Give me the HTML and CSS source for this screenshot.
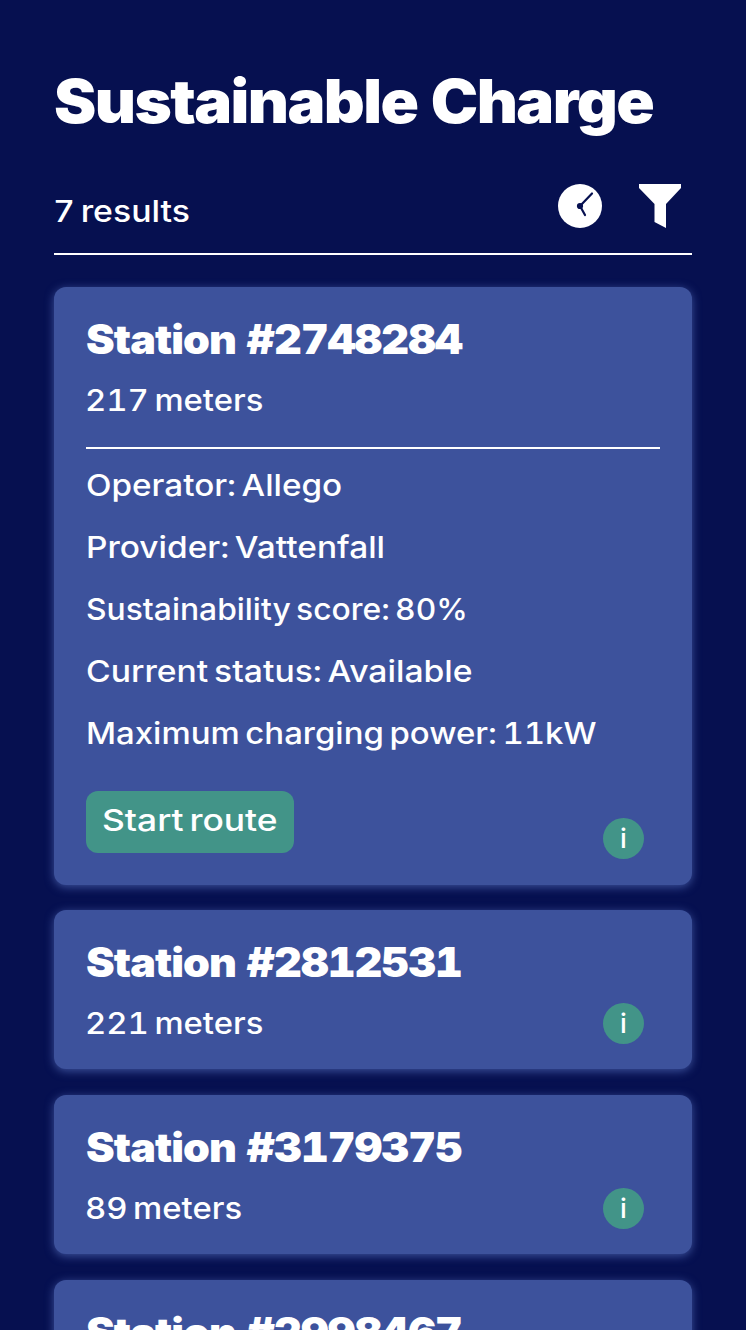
FILE: index.html
```html
<!DOCTYPE html>
<html lang="en">
<head>
<meta charset="utf-8">
<title>Sustainable Charge</title>
<link rel="stylesheet" href="styles.css">
</head>
<body>
<main class="page">
  <h1 class="title">Sustainable Charge</h1>
  <header class="toolbar">
    <p class="text results">7 results</p>
    <div class="tools">
      <svg class="clock" viewBox="0 0 44 44" width="44" height="44"><circle cx="22" cy="22" r="22" fill="#fff"/><path d="M22 22L34 9.500M22 22L27 31" stroke="#061050" stroke-width="2.200" stroke-linecap="round"/><circle cx="22" cy="22" r="3.100" fill="#061050"/></svg>
      <svg class="filter" viewBox="0 0 42 44" width="42" height="44"><path d="M0 0H42V4L27 20V44L15.500 38V20L0 4Z" fill="#fff"/></svg>
    </div>
  </header>
  <section class="stations">
    <article class="card open">
      <h2 class="name">Station #2748284</h2>
      <p class="text distance">217 meters</p>
      <ul class="details">
        <li class="text operator">Operator: Allego</li>
        <li class="text provider">Provider: Vattenfall</li>
        <li class="text score">Sustainability score: 80%</li>
        <li class="text status">Current status: Available</li>
        <li class="text power">Maximum charging power: 11kW</li>
      </ul>
      <button class="route"><span class="text route-label">Start route</span></button>
      <button class="info">i</button>
    </article>
    <article class="card">
      <h2 class="name">Station #2812531</h2>
      <p class="text distance">221 meters</p>
      <button class="info">i</button>
    </article>
    <article class="card">
      <h2 class="name">Station #3179375</h2>
      <p class="text distance">89 meters</p>
      <button class="info">i</button>
    </article>
    <article class="card">
      <h2 class="name">Station #2998467</h2>
    </article>
  </section>
</main>
</body>
</html>
```
FILE: styles.css
```css
* { box-sizing: border-box; margin: 0; padding: 0; }
body { height: 1330px; overflow: hidden; background: #061050; color: #fff; font-family: Inter, sans-serif; font-variant-numeric: tabular-nums; }
.page { height: 1330px; overflow: hidden; padding: 66px 54px 0; }
.title, .name, .text { width: max-content; white-space: nowrap; transform-origin: 0 50%; transform: scaleX(var(--stretch, 1)); }
.title { --stretch: 1.059; font-size: 60px; line-height: 70px; font-weight: 900; letter-spacing: -1.5px; word-spacing: -2px; }
.toolbar { height: 119px; border-bottom: 2px solid #fff; display: flex; justify-content: space-between; align-items: flex-end; }
.text { --stretch: 1.115; font-size: 30px; line-height: 38px; font-weight: 500; word-spacing: -3px; }
.results { --stretch: 1.128; margin: 0 0 23px -1px; }
.tools { display: flex; gap: 37px; padding: 0 11px 25px 0; }
.tools svg { display: block; }
.stations { padding-top: 32px; display: grid; gap: 26px; }
.card { position: relative; height: 159px; padding: 28px 32px 27px; border-radius: 12px; background: #3d529c; box-shadow: 0 2px 10px #3d529c; }
.card.open { height: 598px; padding-bottom: 32px; margin-bottom: -1px; }
.name { --stretch: 1.05; font-size: 41px; line-height: 48px; font-weight: 900; letter-spacing: -0.9px; }
.distance { --stretch: 1.095; margin: 18px 0 0 -1px; }
.details { list-style: none; margin-top: 28px; padding-top: 5px; border-top: 2px solid #fff; }
.details .text { line-height: 62px; }
.operator { --stretch: 1.108; }
.score { --stretch: 1.061; }
.status { --stretch: 1.123; }
.power { --stretch: 1.098; }
.route, .info { border: 0; color: #fff; background: #429488; font-family: inherit; }
.route { display: block; width: 208px; height: 62px; margin-top: 27px; padding: 0 16px 5px; border-radius: 12px; text-align: left; }
.route-label { --stretch: 1.18; display: block; }
.info { position: absolute; right: 48px; bottom: 26px; width: 41px; height: 41px; border-radius: 50%; font-size: 27px; line-height: 39px; font-weight: 500; }
.card:not(.open) .info { bottom: 25px; }
```
